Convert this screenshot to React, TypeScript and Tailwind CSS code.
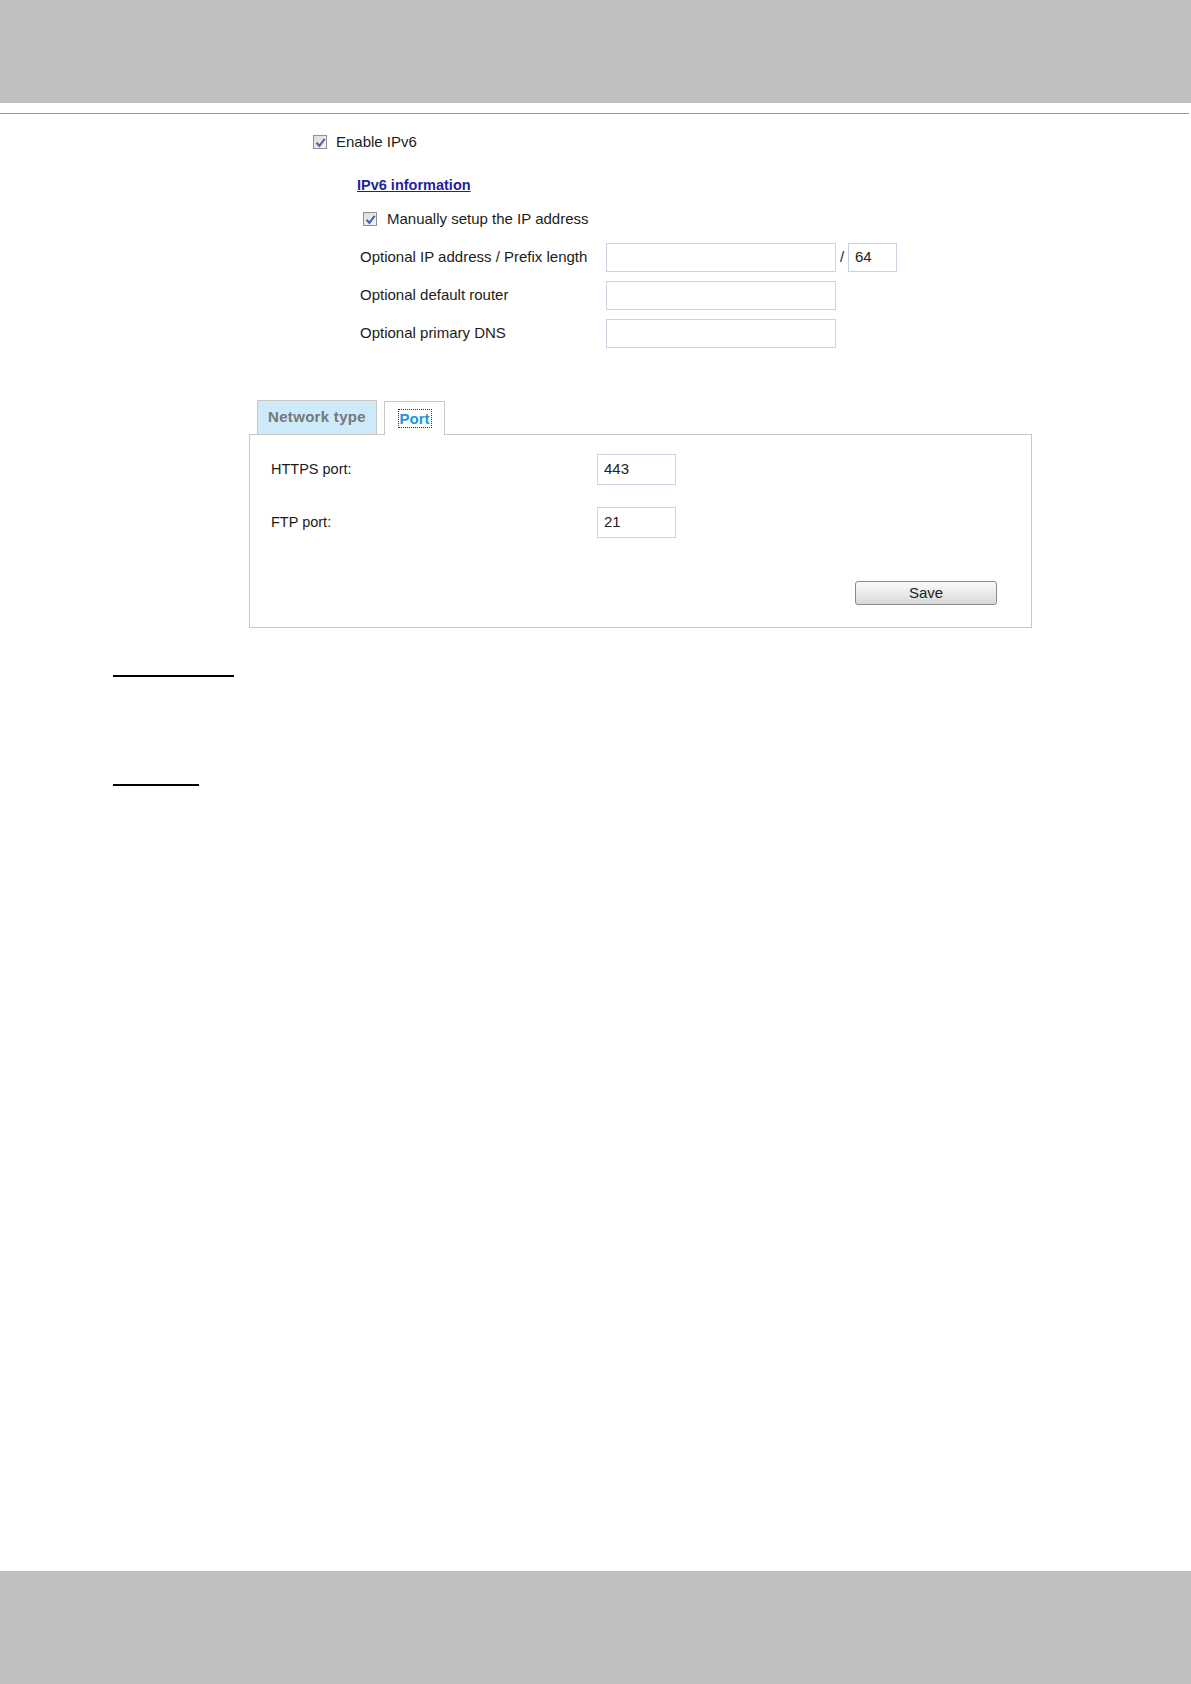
function Check({ className = "" }: { className?: string }) {
  return (
    <span
      className={`inline-flex h-[14px] w-[14px] shrink-0 items-center justify-center border border-[#8e8f8f] bg-gradient-to-br from-[#dcdcdc] to-[#f7f7f7] ${className}`}
    >
      <svg viewBox="0 0 10 10" className="h-[11px] w-[11px]">
        <path d="M1.4 5.2 L4 8 L8.8 1.6" fill="none" stroke="#4e64a8" strokeWidth="1.9" />
      </svg>
    </span>
  );
}

function Field({ value = "", className = "" }: { value?: string; className?: string }) {
  return (
    <div
      className={`flex items-center border border-[#c9d3e2] bg-white px-[6px] text-[15px] text-[#222] ${className}`}
    >
      {value}
    </div>
  );
}

export default function App() {
  return (
    <div className="flex h-[1684px] w-[1191px] flex-col bg-white font-['Liberation_Sans',Arial,sans-serif] text-[#1c1c1c]">
      {/* page header band */}
      <div className="h-[103px] bg-[#bfc1c0]" />
      <div className="mt-[10px] mr-[2px] h-px bg-[#9a9a9a]" />

      <main className="flex-1 pt-[19px]">
        {/* Enable IPv6 */}
        <div className="flex h-[18px] items-center gap-[9px] pl-[313px] text-[15px]">
          <Check />
          <span>Enable IPv6</span>
        </div>

        <div className="mt-[25px] h-[18px] pl-[357px] text-[14.5px] leading-[18px] font-bold text-[#1f1f9e] underline">
          IPv6 information
        </div>

        <div className="mt-[16px] flex h-[18px] items-center gap-[10px] pl-[363px] text-[15px]">
          <Check />
          <span>Manually setup the IP address</span>
        </div>

        <div className="mt-[15px] grid grid-cols-[246px_auto] gap-y-[9px] pl-[360px] text-[15px]">
          <div className="flex items-center">Optional IP address / Prefix length</div>
          <div className="flex items-center">
            <Field className="h-[29px] w-[230px]" />
            <span className="w-[12px] text-center text-[15px]">/</span>
            <Field className="h-[29px] w-[49px]" value="64" />
          </div>
          <div className="flex items-center">Optional default router</div>
          <Field className="h-[29px] w-[230px]" />
          <div className="flex items-center">Optional primary DNS</div>
          <Field className="h-[29px] w-[230px]" />
        </div>

        {/* tabs */}
        <div className="mt-[52px] pl-[249px]">
          <div className="flex items-end gap-[7px] pl-[8px]">
            <div className="flex h-[34px] w-[120px] items-center justify-center border border-b-0 border-[#cbc7bf] bg-[#cdeafb] text-[15px] font-bold tracking-[0.3px] text-[#777]">
              Network type
            </div>
            <div className="relative z-10 -mb-px flex h-[34px] w-[61px] items-center justify-center border border-b-0 border-[#cbc7bf] bg-white">
              <span className="border border-dotted border-[#333] px-px text-[15px] leading-[17px] font-bold text-[#2196df]">
                Port
              </span>
            </div>
          </div>
          <div className="w-[783px] border border-[#cbc7bf] pt-[19px] pr-[34px] pb-[22px] pl-[21px] text-[14.5px]">
            <div className="grid grid-cols-[326px_auto] gap-y-[22px]">
              <div className="flex items-center">HTTPS port:</div>
              <Field className="h-[31px] w-[79px]" value="443" />
              <div className="flex items-center">FTP port:</div>
              <Field className="h-[31px] w-[79px]" value="21" />
            </div>
            <div className="mt-[43px] flex justify-end">
              <button className="h-[24px] w-[142px] rounded-[3px] border border-[#8a8a8a] bg-gradient-to-b from-[#fafafa] to-[#d9d9d9] text-[15px] text-[#222]">
                Save
              </button>
            </div>
          </div>
        </div>

        {/* blank underlined headings */}
        <div className="mt-[47px] ml-[113px] h-[2px] w-[121px] bg-black" />
        <div className="mt-[107px] ml-[113px] h-[2px] w-[86px] bg-black" />
      </main>

      <div className="h-[113px] bg-[#bfc1c0]" />
    </div>
  );
}
